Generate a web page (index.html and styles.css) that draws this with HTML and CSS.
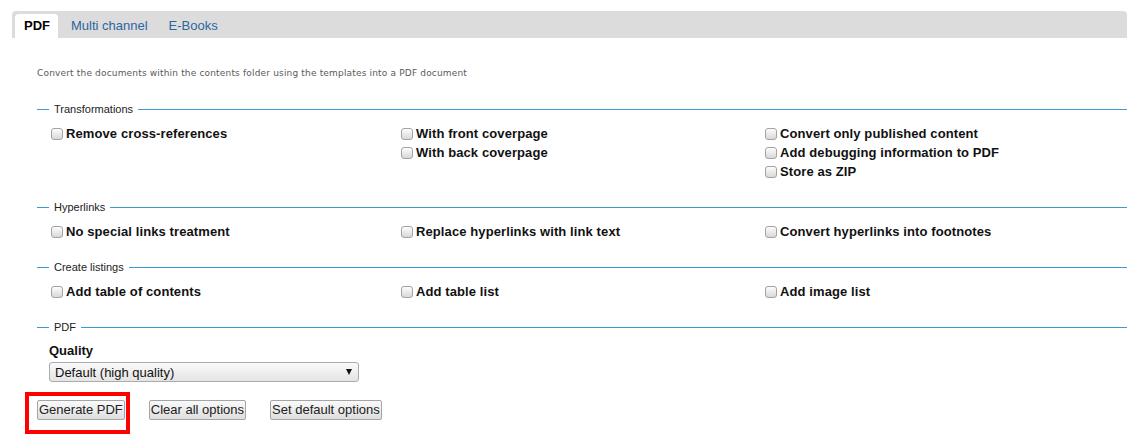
FILE: index.html
```html
<!DOCTYPE html>
<html>
<head>
<meta charset="utf-8">
<link rel="stylesheet" href="styles.css">
</head>
<body>
<div class="page">
  <div class="tabbar">
    <div class="tab active">PDF</div>
    <div class="tab">Multi channel</div>
    <div class="tab">E-Books</div>
  </div>
  <div class="panel">
    <p class="desc">Convert the documents within the contents folder using the templates into a PDF document</p>

    <fieldset class="group">
      <legend>Transformations</legend>
      <div class="grid">
        <div class="col">
          <label class="opt"><input type="checkbox" class="cb">Remove cross-references</label>
        </div>
        <div class="col">
          <label class="opt"><input type="checkbox" class="cb">With front coverpage</label>
          <label class="opt"><input type="checkbox" class="cb">With back coverpage</label>
        </div>
        <div class="col">
          <label class="opt"><input type="checkbox" class="cb">Convert only published content</label>
          <label class="opt"><input type="checkbox" class="cb">Add debugging information to PDF</label>
          <label class="opt"><input type="checkbox" class="cb">Store as ZIP</label>
        </div>
      </div>
    </fieldset>

    <fieldset class="group">
      <legend>Hyperlinks</legend>
      <div class="grid">
        <div class="col"><label class="opt"><input type="checkbox" class="cb">No special links treatment</label></div>
        <div class="col"><label class="opt"><input type="checkbox" class="cb">Replace hyperlinks with link text</label></div>
        <div class="col"><label class="opt"><input type="checkbox" class="cb">Convert hyperlinks into footnotes</label></div>
      </div>
    </fieldset>

    <fieldset class="group">
      <legend>Create listings</legend>
      <div class="grid">
        <div class="col"><label class="opt"><input type="checkbox" class="cb">Add table of contents</label></div>
        <div class="col"><label class="opt"><input type="checkbox" class="cb">Add table list</label></div>
        <div class="col"><label class="opt"><input type="checkbox" class="cb">Add image list</label></div>
      </div>
    </fieldset>

    <fieldset class="group last">
      <legend>PDF</legend>
      <div class="quality-label">Quality</div>
      <div class="select">
        <span>Default (high quality)</span>
        <span class="arrow"></span>
      </div>
    </fieldset>

    <div class="actions">
      <div class="highlight-wrap">
        <button class="btn">Generate PDF</button>
        <span class="highlight"></span>
      </div>
      <button class="btn">Clear all options</button>
      <button class="btn">Set default options</button>
    </div>
  </div>
</div>
</body>
</html>
```

FILE: styles.css
```css
html, body {
  margin: 0;
  padding: 0;
  background: #fff;
}
body {
  font-family: "Liberation Sans", Arial, sans-serif;
  color: #111;
}
.page {
  padding: 11px 9px 0 12px;
}
.tabbar {
  display: flex;
  align-items: flex-end;
  height: 27px;
  background: #dcdcdc;
  border-radius: 4px 4px 0 0;
  padding-left: 3px;
}
.tab {
  height: 24px;
  line-height: 24px;
  padding: 0 9px;
  margin-right: 3px;
  font-size: 13px;
  color: #2b66a0;
}
.tab.active {
  background: #fff;
  color: #000;
  font-weight: bold;
  border-radius: 4px 4px 0 0;
  padding: 0 8px 0 9px;
  margin-right: 4px;
}
.panel {
  padding: 0 0 0 25px;
}
.desc {
  margin: 29px 0 0 0;
  font-family: "DejaVu Sans", Verdana, sans-serif;
  font-size: 9px;
  line-height: 12px;
  color: #5a5a5a;
  letter-spacing: 0.17px;
}
.group {
  margin: 23px 0 0 0;
  padding: 0 0 0 12px;
  border: 0;
  border-top: 1px solid #3d9bd4;
  min-width: 0;
}
.group + .group {
  margin-top: 19px;
}
.group legend {
  padding: 0 5px;
  font-size: 11px;
  line-height: 15px;
  color: #222;
}
.grid {
  display: grid;
  grid-template-columns: 350px 364px 1fr;
  padding-top: 7px;
}
.col {
  display: flex;
  flex-direction: column;
}
.opt {
  display: flex;
  align-items: center;
  height: 19px;
  font-size: 13px;
  font-weight: bold;
  color: #111;
  letter-spacing: 0.1px;
}
.cb {
  appearance: none;
  -webkit-appearance: none;
  width: 12px;
  height: 12px;
  margin: 0 3px 0 2px;
  border: 1px solid #a3a3a3;
  border-radius: 3px;
  background: linear-gradient(#fdfdfd, #d8d8d8);
  box-sizing: border-box;
}
.quality-label {
  margin-top: 8px;
  font-size: 13px;
  font-weight: bold;
  line-height: 16px;
}
.select {
  margin-top: 3px;
  width: 310px;
  height: 20px;
  box-sizing: border-box;
  border: 1px solid #ababab;
  border-radius: 3px;
  background: linear-gradient(#fafafa, #e4e4e4);
  display: flex;
  align-items: center;
  justify-content: space-between;
  padding: 0 6px 0 5px;
  font-size: 13px;
  color: #111;
}
.arrow {
  width: 0;
  height: 0;
  border-left: 3.5px solid transparent;
  border-right: 3.5px solid transparent;
  border-top: 6px solid #111;
}
.actions {
  display: flex;
  gap: 24px;
  margin-top: 18px;
  padding-bottom: 20px;
}
.highlight-wrap {
  position: relative;
  display: flex;
}
.btn {
  height: 20px;
  padding: 0 1px;
  margin: 0;
  font-family: "Liberation Sans", Arial, sans-serif;
  font-size: 13px;
  color: #222;
  border: 1px solid #a5a5a5;
  border-radius: 2px;
  background: linear-gradient(#fafafa, #dedede);
  line-height: 18px;
}
.highlight {
  position: absolute;
  left: -12px;
  top: -8px;
  right: -5px;
  bottom: -14px;
  border: 4px solid #ff0000;
  pointer-events: none;
}
```
